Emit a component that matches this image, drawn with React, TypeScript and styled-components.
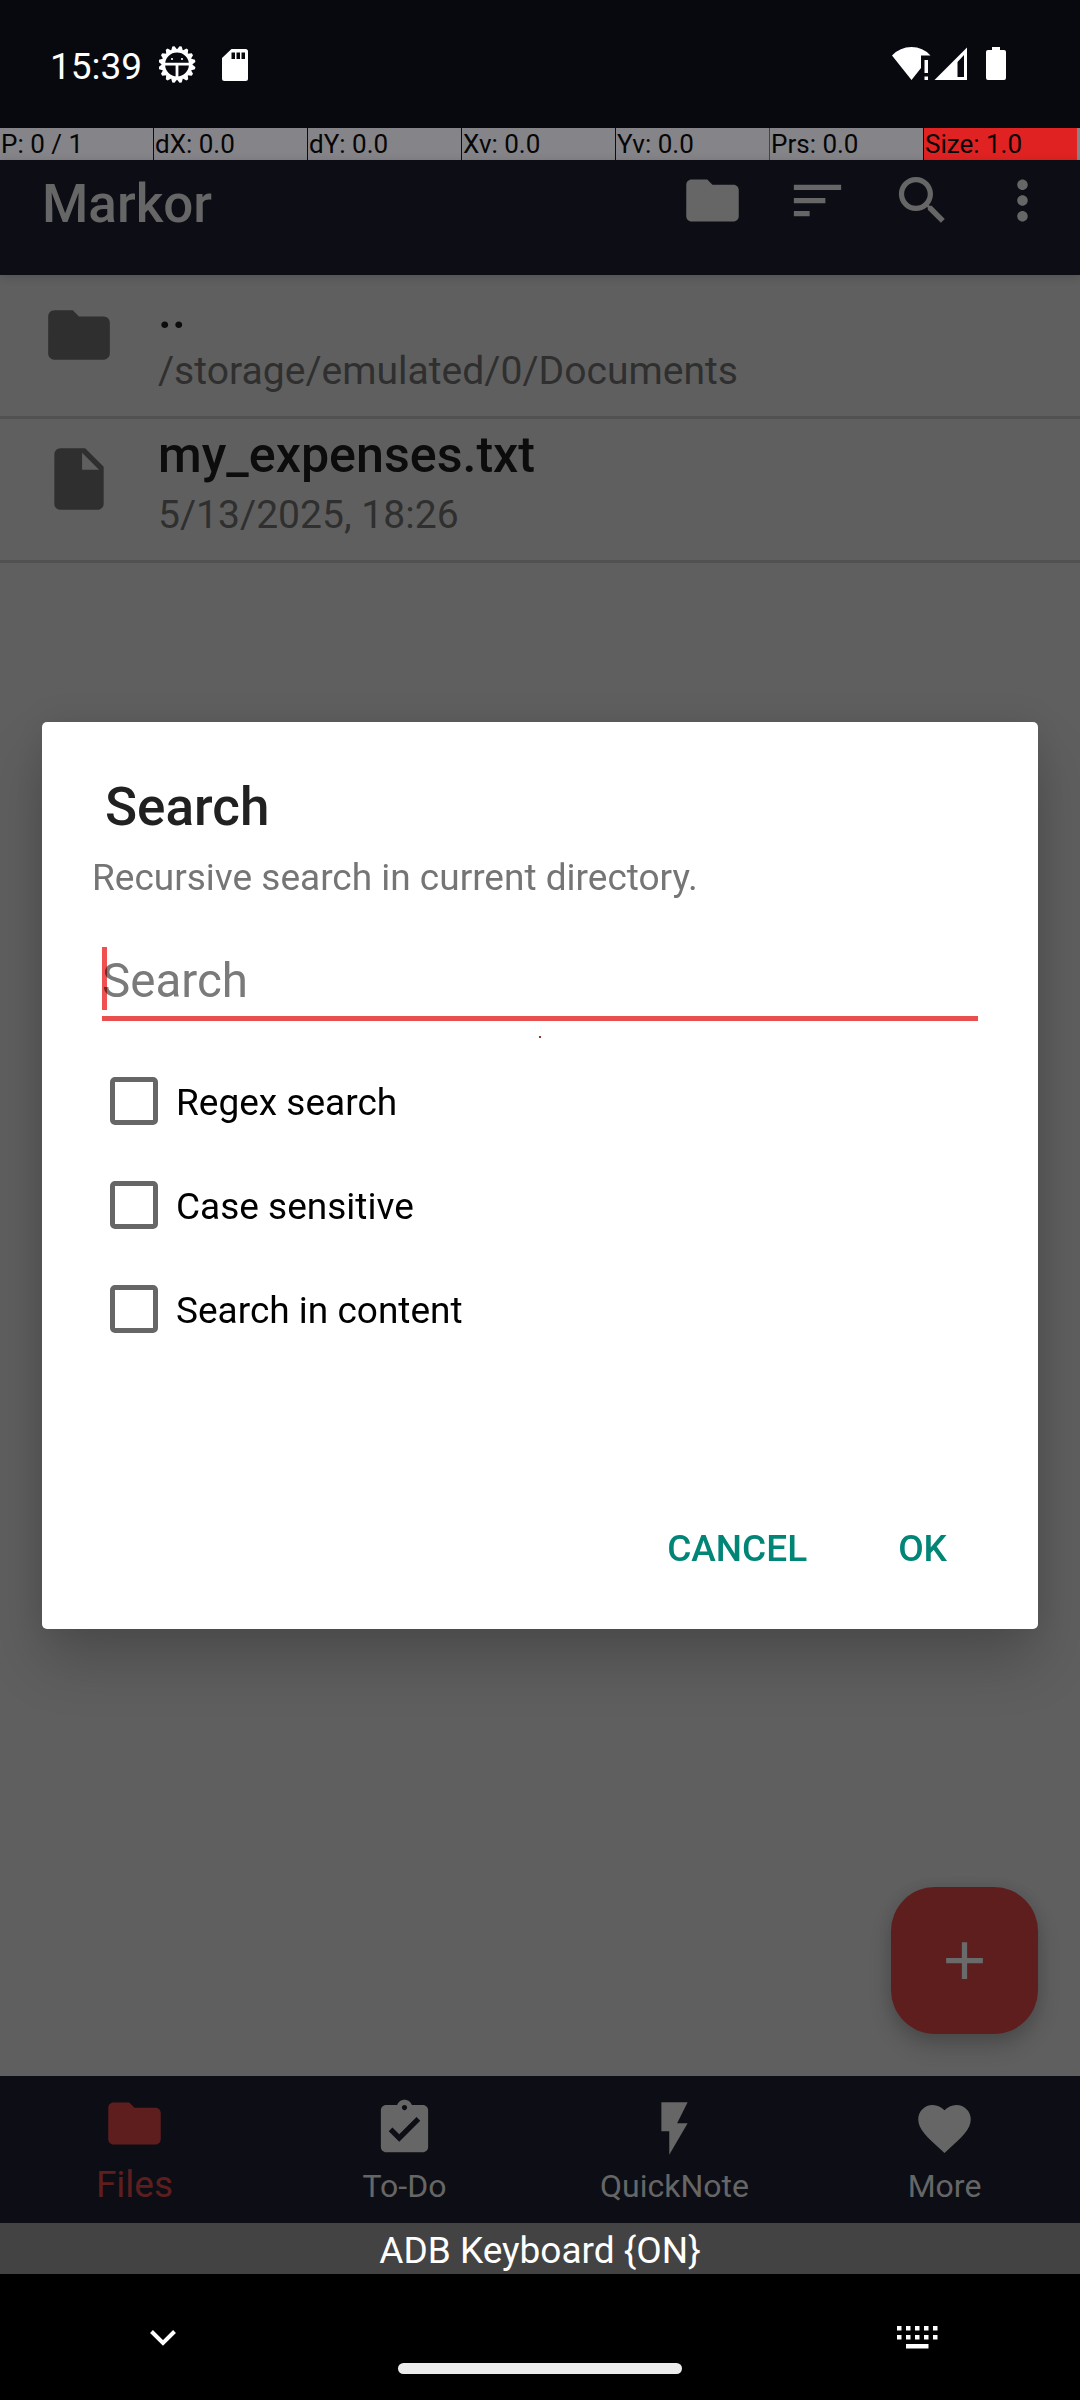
import React, { useState } from 'react';
import styled, { createGlobalStyle, css } from 'styled-components';

const GlobalStyle = createGlobalStyle`
  * { box-sizing: border-box; }
  body { margin: 0; background: #000; }
  svg { display: block; flex: none; }
`;

const Screen = styled.div`
  position: relative;
  width: 1080px;
  height: 2400px;
  display: flex;
  flex-direction: column;
  overflow: hidden;
  background: #5f5f5f;
  font-family: Roboto, 'Noto Sans', sans-serif;
  font-size: 37px;
`;

const StatusBar = styled.header`
  height: 128px;
  flex: none;
  display: flex;
  align-items: flex-start;
  padding: 38px 68px 0 50px;
  background: #07090e;
  color: #fff;
`;

const Clock = styled.span`
  line-height: 57px;
  width: 109px;
`;

const StatusIcons = styled.div<{ $end?: boolean }>`
  display: flex;
  padding-top: 6px;
  ${(p) => p.$end && css`margin-left: auto;`}
`;

const PointerBar = styled.div`
  height: 32px;
  flex: none;
  display: flex;
  background: #0d0e15;
`;

const PointerCell = styled.span<{ $active?: boolean; $redEdge?: boolean }>`
  width: 154px;
  height: 32px;
  padding-left: 1px;
  line-height: 33px;
  font-size: 26px;
  white-space: nowrap;
  color: #060606;
  background: ${(p) => (p.$active ? '#e02222' : '#858489')};
  border-right: 1px solid ${(p) => (p.$active ? '#858489' : p.$redEdge ? '#a01c20' : '#0d0e15')};
`;

const PointerRest = styled.span`
  flex: 1;
  background: #858489;
`;

const Toolbar = styled.div`
  height: 115px;
  flex: none;
  display: flex;
  padding: 9px 26px 0 42px;
  background: #0d0e15;
  color: #666;
  box-shadow: 0 2px 9px rgba(0, 0, 0, 0.16);
  z-index: 1;
`;

const AppTitle = styled.h1`
  margin: 0;
  font-size: 53px;
  font-weight: 500;
  line-height: 70px;
`;

const ToolbarActions = styled.div`
  margin-left: auto;
  display: flex;
  gap: 42px;

  svg:last-child { margin-left: -5px; }
`;

const FileList = styled.main`
  flex: 1;
  display: flex;
  flex-direction: column;
  color: #2f2f2f;
`;

const FileRow = styled.div`
  height: 144px;
  display: flex;
  padding: 23px 0 0 42px;
  border-bottom: 3px solid #515151;
`;

const FileText = styled.div`
  display: flex;
  flex-direction: column;
  margin: -17px 0 0 42px;
`;

const FileName = styled.span`
  font-size: 50.2px;
  font-weight: 500;
  line-height: 60px;
  color: #0c0c0c;
`;

const FileMeta = styled.span`
  margin-top: 5px;
  font-size: 39.1px;
  line-height: 50px;
`;

const Fab = styled.button`
  position: absolute;
  left: 891px;
  top: 1887px;
  width: 147px;
  height: 147px;
  display: flex;
  align-items: center;
  justify-content: center;
  padding: 0;
  border: 0;
  border-radius: 44px;
  background: #5f1e1e;
  color: #6a6a6a;
  box-shadow: 0 12px 22px rgba(0, 0, 0, 0.2), 0 0 14px rgba(0, 0, 0, 0.08);
`;

const BottomNav = styled.nav`
  height: 147px;
  flex: none;
  display: grid;
  grid-template-columns: repeat(4, 1fr);
  background: #0d0e15;
  z-index: 1;
`;

const NavItem = styled.div<{ $active?: boolean }>`
  display: flex;
  flex-direction: column;
  align-items: center;
  padding: ${(p) => (p.$active ? 16 : 21)}px 1px 0 0;
  color: ${(p) => (p.$active ? '#5f1e1e' : '#666')};
`;

const NavLabel = styled.span<{ $active?: boolean }>`
  font-size: ${(p) => (p.$active ? 37 : 32)}px;
  line-height: 44px;
  margin-top: ${(p) => (p.$active ? 8 : 4)}px;
`;

const KeyboardStrip = styled.div`
  height: 51px;
  flex: none;
  background: #434343;
  color: #fff;
  text-align: center;
  line-height: 55px;
`;

const SystemNav = styled.footer`
  height: 126px;
  flex: none;
  display: grid;
  grid-template-columns: 398px 284px 398px;
  background: #000;
`;

const SystemSlot = styled.div<{ $right?: boolean }>`
  padding: ${(p) => (p.$right ? '52px 0 0 215px' : '55px 0 0 149px')};
`;

const Handle = styled.div`
  height: 11px;
  margin-top: 89px;
  border-radius: 6px;
  background: #ececec;
`;

const Dialog = styled.section`
  position: absolute;
  left: 42px;
  top: 722px;
  width: 996px;
  height: 907px;
  display: flex;
  flex-direction: column;
  padding-top: 51px;
  border-radius: 5px;
  background: #fff;
  box-shadow: 0 32px 58px rgba(0, 0, 0, 0.2), 0 0 36px rgba(0, 0, 0, 0.08);
  z-index: 2;
`;

const DialogTitle = styled.h2`
  margin: 0 0 0 63px;
  font-size: 53px;
  font-weight: 500;
  line-height: 68px;
  color: #212121;
`;

const Message = styled.p`
  margin: 15px 0 0 50px;
  line-height: 44px;
  color: #757575;
`;

const Field = styled.div`
  position: relative;
  height: 74px;
  margin: 47px 60px 0;
  border-bottom: 5px solid #ea4f4f;
`;

const Input = styled.input`
  display: block;
  width: 100%;
  height: 68px;
  padding: 0;
  border: 0;
  outline: 0;
  background: transparent;
  font: 47.5px/68px Roboto, sans-serif;
  color: #000;
  &::placeholder { color: #7a7a7a; opacity: 1; }
`;

const Caret = styled.span`
  position: absolute;
  left: 0;
  top: 0;
  width: 5px;
  height: 63px;
  background: #f05050;
  mix-blend-mode: multiply;
`;

const Dot = styled.span`
  width: 2px;
  height: 2px;
  margin: 15px auto 0;
  background: #a03030;
`;

const Options = styled.div`
  display: flex;
  flex-direction: column;
  gap: 56px;
  margin: 39px 0 0 68px;
`;

const Option = styled.label`
  height: 48px;
  display: flex;
  gap: 18px;
  line-height: 52px;
  color: #000;
`;

const Box = styled.span`
  width: 48px;
  height: 48px;
  flex: none;
  border: 5px solid #666;
  border-radius: 5px;
`;

const Actions = styled.div`
  margin-top: auto;
  height: 126px;
  display: flex;
  justify-content: flex-end;
  gap: 91px;
  padding: 22px 91px 0 0;
`;

const Action = styled.button`
  height: 48px;
  padding: 0;
  border: 0;
  background: transparent;
  font: 500 37px/48px Roboto, sans-serif;
  color: #008577;
`;

const paths = {
  folder: 'M10 4H4c-1.1 0-1.99.9-1.99 2L2 18c0 1.1.9 2 2 2h16c1.1 0 2-.9 2-2V8c0-1.1-.9-2-2-2h-8l-2-2z',
  sort: 'M3 18h6v-2H3v2zM3 6v2h18V6H3zm0 7h12v-2H3v2z',
  search:
    'M15.5 14h-.79l-.28-.27C15.41 12.59 16 11.11 16 9.5 16 5.91 13.09 3 9.5 3S3 5.91 3 9.5 5.91 16 9.5 16c1.61 0 3.09-.59 4.23-1.57l.27.28v.79l5 4.99L20.49 19l-4.99-5zm-6 0C7.01 14 5 11.99 5 9.5S7.01 5 9.5 5 14 7.01 14 9.5 11.99 14 9.5 14z',
  more: 'M12 8c1.1 0 2-.9 2-2s-.9-2-2-2-2 .9-2 2 .9 2 2 2zm0 2c-1.1 0-2 .9-2 2s.9 2 2 2 2-.9 2-2-.9-2-2-2zm0 6c-1.1 0-2 .9-2 2s.9 2 2 2 2-.9 2-2-.9-2-2-2z',
  file: 'M6 2c-1.1 0-1.99.9-1.99 2L4 20c0 1.1.89 2 1.99 2H18c1.1 0 2-.9 2-2V8l-6-6H6zm7 7V3.5L18.5 9H13z',
  add: 'M19 13h-6v6h-2v-6H5v-2h6V5h2v6h6v2z',
  todo: 'M19 3h-4.18C14.4 1.84 13.3 1 12 1c-1.3 0-2.4.84-2.82 2H5c-1.1 0-2 .9-2 2v14c0 1.1.9 2 2 2h14c1.1 0 2-.9 2-2V5c0-1.1-.9-2-2-2zm-7 0c.55 0 1 .45 1 1s-.45 1-1 1-1-.45-1-1 .45-1 1-1zm-2 14l-4-4 1.41-1.41L10 14.17l6.59-6.59L18 9l-8 8z',
  flash: 'M7 2v11h3v9l7-12h-4l4-8z',
  heart:
    'M12 21.35l-1.45-1.32C5.4 15.36 2 12.28 2 8.5 2 5.42 4.42 3 7.5 3c1.74 0 3.41.81 4.5 2.09C13.09 3.81 14.76 3 16.5 3 19.58 3 22 5.42 22 8.5c0 3.78-3.4 6.86-8.55 11.54L12 21.35z',
};

const Icon = ({ name, size = 63 }: { name: keyof typeof paths; size?: number }) => (
  <svg width={size} height={size} viewBox="0 0 24 24" fill="currentColor">
    <path d={paths[name]} />
  </svg>
);

const teeth = Array.from({ length: 16 }, (_, i) => i * 22.5);

const GearIcon = () => (
  <svg width="63" height="40" viewBox="0 0 63 40" fill="none" stroke="#fff">
    <g transform="translate(18 20.5)">
      <circle r="13.6" strokeWidth="3.4" />
      {teeth.map((a) => (
        <path key={a} d="M-3.2 -14.5L-1.1 -18.5H1.1L3.2 -14.5z" fill="#fff" stroke="none" transform={`rotate(${a + 11.25})`} />
      ))}
      <path d="M-13 -0.3H13M0 0V14" strokeWidth="2.8" />
      <circle cx="-5" cy="-5.5" r="1.1" fill="#fff" stroke="none" />
      <circle cx="5" cy="-5.5" r="1.1" fill="#fff" stroke="none" />
    </g>
  </svg>
);

const SdIcon = () => (
  <svg width="28" height="40" viewBox="0 0 28 40">
    <path d="M9.500 5H23.500Q26 5 26 7.500V34.500Q26 37 23.500 37H2.500Q0 37 0 34.500V14z" fill="#fff" />
    <path d="M9.500 8.500h3.500v6.500h-3.500zM14.500 8.500h3.500v6.500h-3.500zM19.500 8.500h3.500v6.500h-3.500z" fill="#07090e" />
  </svg>
);

const SignalIcons = () => (
  <svg width="120" height="40" viewBox="0 0 120 40" fill="#fff">
    <path d="M0 11.500Q8 3 19.500 3T38.500 11.500H29V24L19.500 36z" />
    <path d="M32.500 16h3.500v13h-3.500zM32.500 32.500h3.500v3.500h-3.500z" />
    <path fillRule="evenodd" d="M75 3.500V36H42.500zM72 11L65.500 18V33H72z" />
    <path d="M100 3h8v3h4q2 0 2 2v26q0 2-2 2h-16q-2 0-2-2v-26q0-2 2-2h4z" />
  </svg>
);

const cells = ['P: 0 / 1', 'dX: 0.0', 'dY: 0.0', 'Xv: 0.0', 'Yv: 0.0', 'Prs: 0.0', 'Size: 1.0'];
const options = ['Regex search', 'Case sensitive', 'Search in content'];

export default function App() {
  const [query, setQuery] = useState('');
  return (
    <Screen>
      <GlobalStyle />
      <StatusBar>
        <Clock>15:39</Clock>
        <StatusIcons>
          <GearIcon />
          <SdIcon />
        </StatusIcons>
        <StatusIcons $end>
          <SignalIcons />
        </StatusIcons>
      </StatusBar>
      <PointerBar>
        {cells.map((c, i) => (
          <PointerCell key={c} $active={i === 6} $redEdge={i === 4}>
            {c}
          </PointerCell>
        ))}
        <PointerRest />
      </PointerBar>
      <Toolbar>
        <AppTitle>Markor</AppTitle>
        <ToolbarActions>
          <Icon name="folder" />
          <Icon name="sort" />
          <Icon name="search" />
          <Icon name="more" />
        </ToolbarActions>
      </Toolbar>
      <FileList>
        <FileRow>
          <Icon name="folder" size={74} />
          <FileText>
            <FileName>..</FileName>
            <FileMeta>/storage/emulated/0/Documents</FileMeta>
          </FileText>
        </FileRow>
        <FileRow>
          <Icon name="file" size={74} />
          <FileText>
            <FileName>my_expenses.txt</FileName>
            <FileMeta>5/13/2025, 18:26</FileMeta>
          </FileText>
        </FileRow>
      </FileList>
      <Fab aria-label="Add">
        <Icon name="add" />
      </Fab>
      <BottomNav>
        <NavItem $active>
          <Icon name="folder" />
          <NavLabel $active>Files</NavLabel>
        </NavItem>
        <NavItem>
          <Icon name="todo" />
          <NavLabel>To-Do</NavLabel>
        </NavItem>
        <NavItem>
          <Icon name="flash" />
          <NavLabel>QuickNote</NavLabel>
        </NavItem>
        <NavItem>
          <Icon name="heart" />
          <NavLabel>More</NavLabel>
        </NavItem>
      </BottomNav>
      <KeyboardStrip>ADB Keyboard {'{ON}'}</KeyboardStrip>
      <SystemNav>
        <SystemSlot>
          <svg width="28" height="20" viewBox="0 0 28 20" fill="none" stroke="#fff" strokeWidth="4">
            <path d="M2.500 2.500L14 14L25.500 2.500" />
          </svg>
        </SystemSlot>
        <Handle />
        <SystemSlot $right>
          <svg width="42" height="24" viewBox="0 0 42 24" fill="#fff">
            {[0, 9, 18, 27, 36].map((x) => (
              <path key={x} d={`M${x} 0h4.500v4.500h-4.500zM${x} 9h4.500v4.500h-4.500z`} />
            ))}
            <path d="M9 18h22.500v4.500H9z" />
          </svg>
        </SystemSlot>
      </SystemNav>
      <Dialog>
        <DialogTitle>Search</DialogTitle>
        <Message>Recursive search in current directory.</Message>
        <Field>
          <Input placeholder="Search" value={query} onChange={(e) => setQuery(e.target.value)} />
          <Caret />
        </Field>
        <Dot />
        <Options>
          {options.map((o) => (
            <Option key={o}>
              <Box />
              {o}
            </Option>
          ))}
        </Options>
        <Actions>
          <Action>CANCEL</Action>
          <Action>OK</Action>
        </Actions>
      </Dialog>
    </Screen>
  );
}
